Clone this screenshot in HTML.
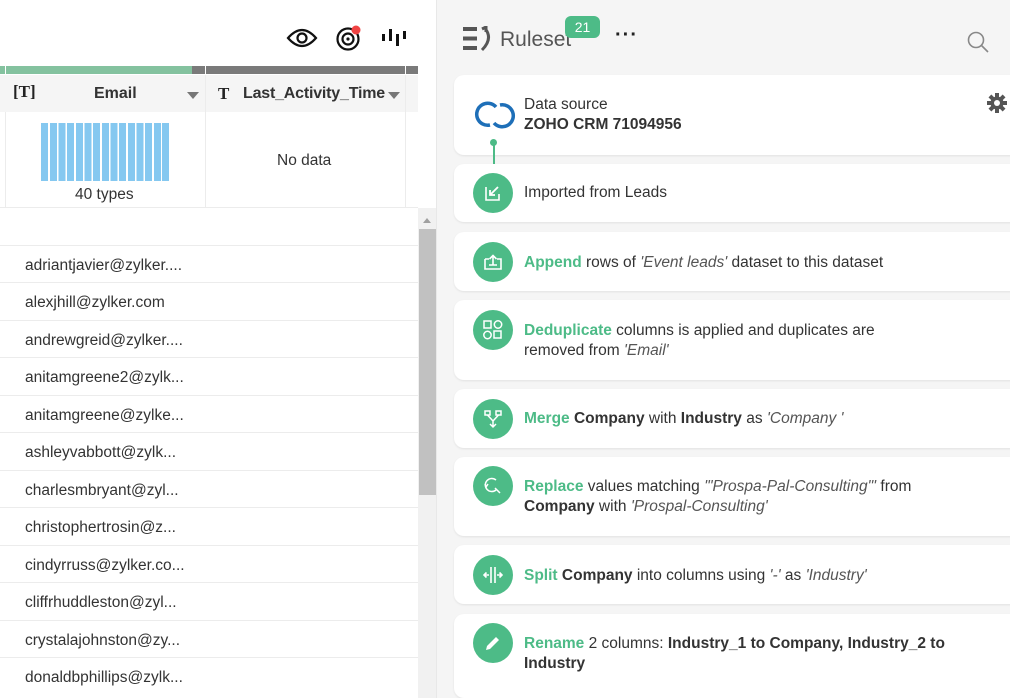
<!DOCTYPE html>
<html><head><meta charset="utf-8"><style>
*{box-sizing:border-box;margin:0;padding:0}
body{width:1010px;height:698px;overflow:hidden;font-family:"Liberation Sans",sans-serif;background:#f5f5f5;position:relative;color:#333}
#left{position:absolute;left:0;top:0;width:437px;height:698px;background:#fff;border-right:1px solid #e8e8e8}
.abs{position:absolute}
.row{position:absolute;left:0;width:418px;height:37.5px;border-top:1px solid #ececec;font-size:15.5px;color:#333;padding-left:25px;line-height:39px}
.card{position:absolute;left:454px;width:570px;background:#fff;border-radius:10px;box-shadow:0 1px 2px rgba(0,0,0,.08)}
.ic{position:absolute;left:19px;width:40px;height:40px;border-radius:50%;background:#4dbb87}
.ic svg{position:absolute;left:10px;top:10px}
.tx{position:absolute;left:70px;font-size:15.5px;line-height:20px;color:#333}
.g{color:#4dbb87;font-weight:bold}
b{font-weight:bold;color:#333}
i{color:#555}
</style></head><body>
<div id="left">
 <svg class="abs" style="left:286px;top:27px" width="32" height="22" viewBox="0 0 32 22"><path d="M2 11 Q16 -5 30 11 Q16 27 2 11Z" fill="none" stroke="#111" stroke-width="2.2"/><circle cx="16" cy="11" r="4.5" fill="none" stroke="#111" stroke-width="2.2"/></svg>
 <svg class="abs" style="left:336px;top:25px" width="28" height="26" viewBox="0 0 28 26"><circle cx="12" cy="14" r="10.5" fill="none" stroke="#111" stroke-width="2.2"/><circle cx="12" cy="14" r="5.5" fill="none" stroke="#111" stroke-width="2.2"/><circle cx="12" cy="14" r="1.6" fill="#111"/><circle cx="20" cy="5" r="4.5" fill="#f04343"/></svg>
 <svg class="abs" style="left:382px;top:29px" width="26" height="18" viewBox="0 0 26 18"><rect x="0" y="5" width="3" height="7" fill="#111"/><rect x="7" y="0" width="3" height="12" fill="#111"/><rect x="14" y="5" width="3" height="12" fill="#111"/><rect x="21" y="2" width="3" height="8" fill="#111"/></svg>
 <div class="abs" style="left:0;top:66px;width:5px;height:8px;background:#84c29f"></div>
 <div class="abs" style="left:6px;top:66px;width:186px;height:8px;background:#84c29f"></div>
 <div class="abs" style="left:192px;top:66px;width:13px;height:8px;background:#7a7a7a"></div>
 <div class="abs" style="left:206px;top:66px;width:199px;height:8px;background:#7a7a7a"></div>
 <div class="abs" style="left:406px;top:66px;width:12px;height:8px;background:#7a7a7a"></div>
 <div class="abs" style="left:0;top:75px;width:418px;height:37px;background:#f5f5f5"></div>
 <div class="abs" style="left:205px;top:75px;width:1px;height:132px;background:#ececec"></div>
 <div class="abs" style="left:405px;top:75px;width:1px;height:132px;background:#ececec"></div>
 <div class="abs" style="left:5px;top:112px;width:1px;height:95px;background:#ececec"></div>
 <div class="abs" style="left:13px;top:82px;font:bold 17px 'Liberation Serif',serif;color:#222">[T]</div>
 <div class="abs" style="left:94px;top:85px;font-size:16px;font-weight:bold;color:#333">Email</div>
 <div class="abs" style="left:187px;top:92px;border:6px solid transparent;border-top:7px solid #777"></div>
 <div class="abs" style="left:218px;top:84px;font:bold 17px 'Liberation Serif',serif;color:#222">T</div>
 <div class="abs" style="left:243px;top:85px;font-size:16px;font-weight:bold;color:#333;letter-spacing:-0.2px">Last_Activity_Time</div>
 <div class="abs" style="left:388px;top:92px;border:6px solid transparent;border-top:7px solid #777"></div>
 <svg class="abs" style="left:41px;top:123px" width="128" height="58"><g fill="#85c8f0">
 <rect x="0" width="7" height="58"/><rect x="9" width="7" height="58"/><rect x="17.5" width="7" height="58"/><rect x="26" width="7" height="58"/><rect x="35" width="7" height="58"/><rect x="43.5" width="7" height="58"/><rect x="52" width="7" height="58"/><rect x="61" width="7" height="58"/><rect x="69.5" width="7" height="58"/><rect x="78" width="7" height="58"/><rect x="87" width="7" height="58"/><rect x="95.5" width="7" height="58"/><rect x="104" width="7" height="58"/><rect x="113" width="7" height="58"/><rect x="121" width="7" height="58"/></g></svg>
 <div class="abs" style="left:75px;top:186px;font-size:15.5px">40 types</div>
 <div class="abs" style="left:277px;top:152px;font-size:15.5px">No data</div>
 <div class="row" style="top:207px"></div>
 <div class="row" style="top:245px">adriantjavier@zylker....</div>
 <div class="row" style="top:282px">alexjhill@zylker.com</div>
 <div class="row" style="top:320px">andrewgreid@zylker....</div>
 <div class="row" style="top:357px">anitamgreene2@zylk...</div>
 <div class="row" style="top:395px">anitamgreene@zylke...</div>
 <div class="row" style="top:432px">ashleyvabbott@zylk...</div>
 <div class="row" style="top:470px">charlesmbryant@zyl...</div>
 <div class="row" style="top:507px">christophertrosin@z...</div>
 <div class="row" style="top:545px">cindyrruss@zylker.co...</div>
 <div class="row" style="top:582px">cliffrhuddleston@zyl...</div>
 <div class="row" style="top:620px">crystalajohnston@zy...</div>
 <div class="row" style="top:657px">donaldbphillips@zylk...</div>
 <div class="abs" style="left:418px;top:208px;width:18px;height:490px;background:#f1f1f1"></div>
 <div class="abs" style="left:423px;top:214px;border:4px solid transparent;border-bottom:5px solid #a0a0a0"></div>
 <div class="abs" style="left:419px;top:229px;width:17px;height:266px;background:#c1c1c1"></div>
</div>

<svg class="abs" style="left:463px;top:26px" width="30" height="26" viewBox="0 0 30 26"><g fill="#555"><rect x="0" y="1" width="14" height="4"/><rect x="0" y="10.5" width="14" height="4"/><rect x="0" y="20" width="14" height="4"/></g><path d="M19 3 L23 1 L23 6 M22.5 3 Q30 13 19 24" fill="none" stroke="#555" stroke-width="3"/></svg>
<div class="abs" style="left:500px;top:28px;font-size:21px;color:#555">Ruleset</div>
<div class="abs" style="left:565px;top:16px;width:35px;height:22px;border-radius:6px;background:#4dbb87;color:#fff;font-size:14px;text-align:center;line-height:22px">21</div>
<div class="abs" style="left:615px;top:24px;font-size:20px;font-weight:bold;color:#222;letter-spacing:1px">···</div>
<svg class="abs" style="left:966px;top:30px" width="24" height="24"><circle cx="10" cy="10" r="7.5" fill="none" stroke="#888" stroke-width="1.6"/><path d="M15.5 15.5 L22 22" stroke="#888" stroke-width="1.6"/></svg>

<div class="card" style="top:75px;height:80px">
 <svg class="abs" style="left:20px;top:24px" width="42" height="32" viewBox="0 0 42 32"><g fill="none" stroke="#1e6fb8" stroke-width="3.5"><path d="M16 26 A11 11 0 1 1 22 8"/><path d="M26 6 A11 11 0 1 1 20 24"/></g></svg>
 <div class="tx" style="top:20px">Data source<br><b>ZOHO CRM 71094956</b></div>
 <svg class="abs" style="left:533px;top:18px" width="20" height="20" viewBox="0 0 20 20"><g fill="#555"><circle cx="10" cy="10" r="6.5"/><rect x="8" y="0" width="4" height="20"/><rect x="0" y="8" width="20" height="4"/><rect x="8" y="0" width="4" height="20" transform="rotate(45 10 10)"/><rect x="8" y="0" width="4" height="20" transform="rotate(-45 10 10)"/></g><circle cx="10" cy="10" r="3" fill="#fff"/></svg>
</div>
<div class="abs" style="left:493px;top:140px;width:2px;height:35px;background:#4dbb87"></div>
<div class="abs" style="left:490px;top:139px;width:7px;height:7px;border-radius:50%;background:#4dbb87"></div>
<div class="card" style="top:164px;height:58px">
 <div class="ic" style="top:9px"><svg width="20" height="20"><path d="M3 4 V17 H16 V11" fill="none" stroke="#fff" stroke-width="1.6"/><path d="M15 4 L8 11 M7 7 V12 H12" fill="none" stroke="#fff" stroke-width="1.8"/></svg></div>
 <div class="tx" style="top:19px">Imported from Leads</div>
</div>
<div class="card" style="top:232px;height:59px">
 <div class="ic" style="top:10px"><svg width="20" height="20"><path d="M2 7 V17 H18 V7 H14 M6 7 H2" fill="none" stroke="#fff" stroke-width="1.6"/><path d="M10 13 V4 M6.5 7 L10 3.5 L13.5 7 M6 13 H14" fill="none" stroke="#fff" stroke-width="1.6"/></svg></div>
 <div class="tx" style="top:21px"><span class="g">Append</span> rows of <i>'Event leads'</i> dataset to this dataset</div>
</div>
<div class="card" style="top:300px;height:80px">
 <div class="ic" style="top:10px"><svg width="20" height="20"><g fill="none" stroke="#fff" stroke-width="1.5"><rect x="1" y="1" width="7" height="7"/><circle cx="15" cy="4.5" r="3.7"/><circle cx="4.5" cy="15" r="3.7"/><rect x="11" y="11" width="7" height="7"/></g></svg></div>
 <div class="tx" style="top:21px"><span class="g">Deduplicate</span> columns is applied and duplicates are<br>removed from <i>'Email'</i></div>
</div>
<div class="card" style="top:389px;height:59px">
 <div class="ic" style="top:10px"><svg width="20" height="20"><g fill="none" stroke="#fff" stroke-width="1.5"><rect x="2" y="2" width="5" height="4"/><rect x="13" y="2" width="5" height="4"/><path d="M4.5 6 L10 12 L15.5 6 M10 12 V18 M7 15 L10 18 L13 15"/></g></svg></div>
 <div class="tx" style="top:20px"><span class="g">Merge</span> <b>Company</b> with <b>Industry</b> as <i>'Company '</i></div>
</div>
<div class="card" style="top:457px;height:79px">
 <div class="ic" style="top:9px"><svg width="20" height="20"><g fill="none" stroke="#fff" stroke-width="1.5"><path d="M13 4 A6.5 6.5 0 1 0 13 14"/><path d="M12 12 L17 17"/><path d="M2 8 L3 11 L5 8"/></g></svg></div>
 <div class="tx" style="top:20px"><span class="g">Replace</span> values matching <i>'"Prospa-Pal-Consulting"'</i> from<br><b>Company</b> with <i>'Prospal-Consulting'</i></div>
</div>
<div class="card" style="top:545px;height:59px">
 <div class="ic" style="top:10px"><svg width="20" height="20"><g fill="none" stroke="#fff" stroke-width="1.6"><path d="M8 2 V18 M12 2 V18 M1 10 H6 M3.5 7.5 L1 10 L3.5 12.5 M14 10 H19 M16.5 7.5 L19 10 L16.5 12.5"/></g></svg></div>
 <div class="tx" style="top:21px"><span class="g">Split</span> <b>Company</b> into columns using <i>'-'</i> as <i>'Industry'</i></div>
</div>
<div class="card" style="top:614px;height:84px">
 <div class="ic" style="top:9px"><svg width="20" height="20"><path d="M3 17 L4 13 L13 4 L16 7 L7 16 Z" fill="#fff"/></svg></div>
 <div class="tx" style="top:20px"><span class="g">Rename</span> 2 columns: <b>Industry_1 to Company, Industry_2 to<br>Industry</b></div>
</div>
</body></html>
